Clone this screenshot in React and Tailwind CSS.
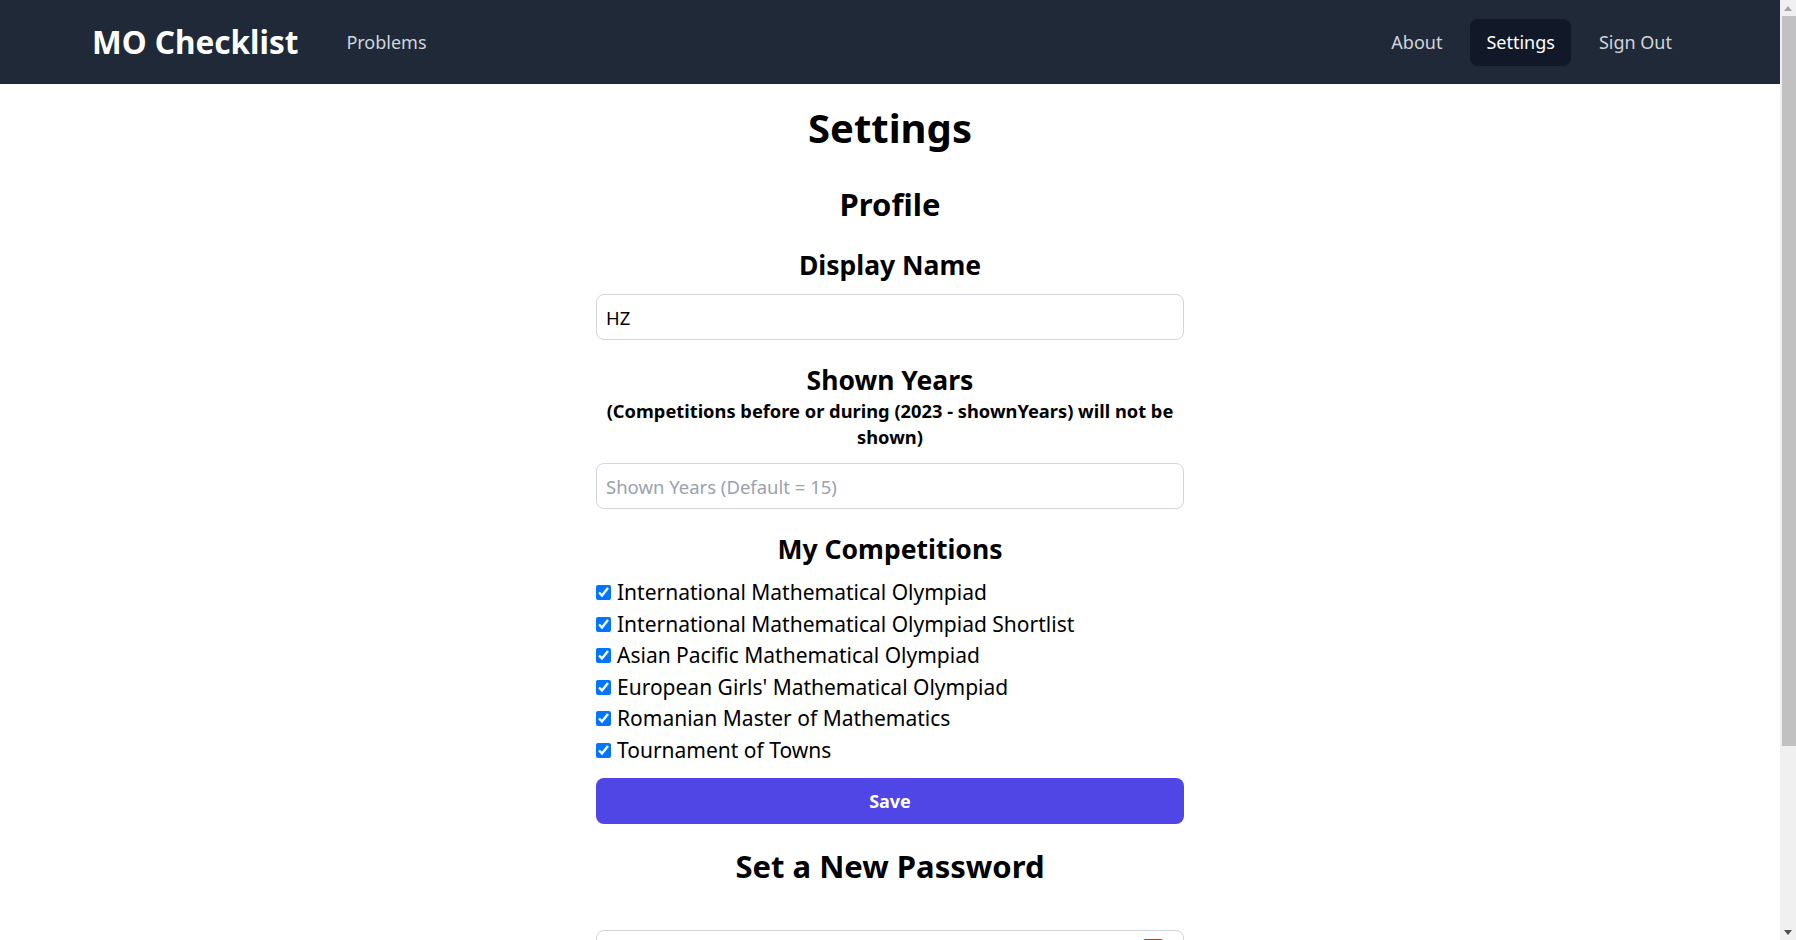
import React from "react";

const competitions = [
  "International Mathematical Olympiad",
  "International Mathematical Olympiad Shortlist",
  "Asian Pacific Mathematical Olympiad",
  "European Girls' Mathematical Olympiad",
  "Romanian Master of Mathematics",
  "Tournament of Towns",
];

function Navbar() {
  return (
    <nav className="h-[84px] bg-[#1f2937] flex items-center justify-between px-[92px]">
      <div className="flex items-center gap-8">
        <a href="#" className="text-[31.5px] font-bold text-white leading-[40px]">
          MO Checklist
        </a>
        <a href="#" className="px-4 h-[47px] flex items-center rounded-md text-[18px] text-[#d1d5db]">
          Problems
        </a>
      </div>
      <div className="flex items-center gap-3">
        <a href="#" className="px-4 h-[47px] flex items-center rounded-md text-[18px] text-[#d1d5db]">
          About
        </a>
        <a href="#" className="px-4 h-[47px] flex items-center rounded-lg text-[18px] text-white bg-[#111827]">
          Settings
        </a>
        <a href="#" className="px-4 h-[47px] flex items-center rounded-md text-[18px] text-[#d1d5db]">
          Sign Out
        </a>
      </div>
    </nav>
  );
}

// classic browser scrollbar as it shows in the screenshot
function Scrollbar() {
  return (
    <div className="fixed top-0 right-0 w-[16px] h-screen bg-[#f0f0f0] flex flex-col items-center">
      <div className="h-[16px] flex items-center justify-center">
        <svg width="8" height="5" viewBox="0 0 8 5"><path d="M0 5 L4 0 L8 5 Z" fill="#a3a3a3" /></svg>
      </div>
      <div className="ml-[2px] w-[14px] h-[730px] bg-[#c1c1c1]"></div>
      <div className="flex-1"></div>
      <div className="h-[16px] flex items-center justify-center">
        <svg width="8" height="5" viewBox="0 0 8 5"><path d="M0 0 L8 0 L4 5 Z" fill="#505050" /></svg>
      </div>
    </div>
  );
}

export default function App() {
  return (
    <div className="min-h-screen bg-white text-black pr-[16px] font-['Noto_Sans',sans-serif]">
      <Navbar />
      <main className="flex flex-col items-center pb-10">
        <h1 className="mt-5 text-[40px] font-bold leading-[48px]">Settings</h1>
        <h2 className="mt-8 text-[31px] font-bold leading-[40px]">Profile</h2>

        <div className="w-[588px] flex flex-col items-center">
          <h3 className="mt-6 text-[26.5px] font-bold leading-[34px]">Display Name</h3>
          <input
            type="text"
            defaultValue="HZ"
            className="mt-3 w-full h-[46px] border border-gray-300 rounded-lg px-[9px] text-[18.5px] outline-none"
          />

          <h3 className="mt-[23px] text-[26.5px] font-bold leading-[34px]">Shown Years</h3>
          <p className="mt-px text-[18.3px] font-bold leading-[26px] text-center">
            (Competitions before or during (2023 - shownYears) will not be shown)
          </p>
          <input
            type="text"
            placeholder="Shown Years (Default = 15)"
            className="mt-[13px] w-full h-[46px] border border-gray-300 rounded-lg px-[9px] text-[18.5px] outline-none placeholder:text-gray-400"
          />

          <h3 className="mt-[23px] text-[26.5px] font-bold leading-[34px]">My Competitions</h3>
          <div className="mt-[11px] w-full flex flex-col">
            {competitions.map((c) => (
              <label key={c} className="flex items-center h-[31.5px] text-[21px] leading-[31.5px]">
                <input type="checkbox" defaultChecked className="w-[15px] h-[15px] mr-[6px] accent-[#0075ff]" />
                {c}
              </label>
            ))}
          </div>
          <button className="mt-3 w-full h-[46px] rounded-lg bg-[#4f46e5] text-white text-[18px] font-bold">
            Save
          </button>

          <h2 className="mt-[22px] text-[31px] font-bold leading-[40px]">Set a New Password</h2>
          {/* password inputs */}
          <div className="mt-[44px] w-full relative">
            <input
              type="password"
              placeholder="New Password"
              className="w-full h-[46px] border border-gray-300 rounded-lg px-[9px] text-[18.5px] outline-none placeholder:text-gray-400"
            />
            <span className="absolute top-[9px] right-[20px] w-[22px] h-[26px] rounded bg-[#dc2626]"></span>
          </div>
          <input
            type="password"
            placeholder="Confirm New Password"
            className="mt-3 w-full h-[46px] border border-gray-300 rounded-lg px-[9px] text-[18.5px] outline-none placeholder:text-gray-400"
          />
          <button className="mt-3 w-full h-[46px] rounded-lg bg-[#4f46e5] text-white text-[18px] font-bold">
            Change Password
          </button>
        </div>
      </main>
      <Scrollbar />
    </div>
  );
}
